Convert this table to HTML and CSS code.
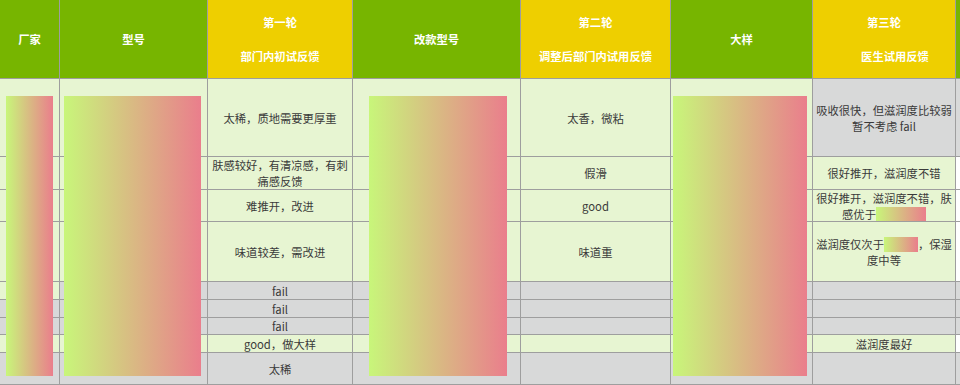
FILE: index.html
```html
<!DOCTYPE html>
<html lang="zh">
<head>
<meta charset="utf-8">
<title>试用反馈</title>
<link rel="stylesheet" href="styles.css">
</head>
<body>
<div class="sheet">
  <div class="row head">
    <div class="h green">厂家</div>
    <div class="h green">型号</div>
    <div class="h yellow"><div class="two"><span>第一轮</span><span>部门内初试反馈</span></div></div>
    <div class="h green">改款型号</div>
    <div class="h yellow"><div class="two"><span>第二轮</span><span>调整后部门内试用反馈</span></div></div>
    <div class="h green">大样</div>
    <div class="h yellow"><div class="two"><span>第三轮</span><span class="shift">医生试用反馈</span></div></div>
    <div class="h green"></div>
  </div>

  <div class="row lg">
    <div></div><div></div>
    <div>太稀，质地需要更厚重</div>
    <div></div>
    <div>太香，微粘</div>
    <div></div>
    <div class="gy">吸收很快，但滋润度比较弱<br>暂不考虑 fail</div>
    <div class="gy"></div>
  </div>

  <div class="row lg">
    <div></div><div></div>
    <div>肤感较好，有清凉感，有刺痛感反馈</div>
    <div></div>
    <div>假滑</div>
    <div></div>
    <div>很好推开，滋润度不错</div>
    <div class="wh"></div>
  </div>

  <div class="row lg">
    <div></div><div></div>
    <div>难推开，改进</div>
    <div></div>
    <div>good</div>
    <div></div>
    <div><p>很好推开，滋润度不错，肤感优于<span class="pic w50"></span></p></div>
    <div class="wh"></div>
  </div>

  <div class="row lg">
    <div></div><div></div>
    <div>味道较差，需改进</div>
    <div></div>
    <div>味道重</div>
    <div></div>
    <div><p>滋润度仅次于<span class="pic w34"></span>，保湿度中等</p></div>
    <div class="wh"></div>
  </div>

  <div class="row gr">
    <div class="lgc"></div><div></div>
    <div>fail</div>
    <div></div><div></div><div></div><div></div><div></div>
  </div>

  <div class="row gr">
    <div></div><div></div>
    <div>fail</div>
    <div></div><div></div><div></div><div></div><div></div>
  </div>

  <div class="row gr">
    <div></div><div></div>
    <div>fail</div>
    <div></div><div></div><div></div><div></div><div></div>
  </div>

  <div class="row lg">
    <div></div><div></div>
    <div>good，做大样</div>
    <div></div><div></div><div></div>
    <div>滋润度最好</div>
    <div class="wh"></div>
  </div>

  <div class="row gr">
    <div></div><div></div>
    <div>太稀</div>
    <div></div><div></div><div></div><div></div><div></div>
  </div>

  <div class="photo p1"></div>
  <div class="photo p2"></div>
  <div class="photo p4"></div>
  <div class="photo p6"></div>
</div>
</body>
</html>
```

FILE: styles.css
```css
html, body {
  margin: 0;
  padding: 0;
  background: #ffffff;
}

body {
  font-family: "Noto Sans CJK SC", "Noto Sans", sans-serif;
  font-size: 11.3px;
  color: #3a3a3a;
}

.sheet {
  position: relative;
  width: 960px;
  display: grid;
  grid-template-columns: 59px 147px 144px 167px 149px 141px 142px 1fr;
  grid-template-rows: 78px 77px 32px 31px 59px 17px 17px 16px 17px 31px;
  gap: 1px;
  padding-bottom: 1px;
  background: #9e9e9e;
}

.row {
  display: contents;
}

.row > div {
  display: flex;
  align-items: center;
  justify-content: center;
  text-align: center;
  line-height: 16px;
  padding: 0 3px;
  min-width: 0;
  overflow: hidden;
}

.row p {
  margin: 0;
}

.row.lg > div { background: #e7f5d2; }
.row.gr > div { background: #d8d9d9; }
.row > div.gy { background: #d8d9d9; }
.row > div.wh { background: #ffffff; }
.row > div.lgc { background: #e7f5d2; }

.head > div {
  color: #ffffff;
  font-weight: bold;
}

.head > .green { background: #77b500; }
.head > .yellow { background: #eecf00; }

.two {
  display: flex;
  flex-direction: column;
  align-items: center;
  gap: 17px;
  line-height: 17px;
}

.two .shift {
  padding-left: 22px;
}

.pic {
  display: inline-block;
  height: 15px;
  vertical-align: -3px;
  background: linear-gradient(to right, #c8f67a, #ea7e8c);
}

.w50 { width: 50px; }
.w34 { width: 34px; }

.photo {
  position: absolute;
  top: 96px;
  height: 280px;
  background: linear-gradient(to right, #c8f67a, #ea7e8c);
}

.p1 { left: 6px; width: 47px; }
.p2 { left: 64px; width: 137px; }
.p4 { left: 369px; width: 138px; }
.p6 { left: 673px; width: 134px; }
```
